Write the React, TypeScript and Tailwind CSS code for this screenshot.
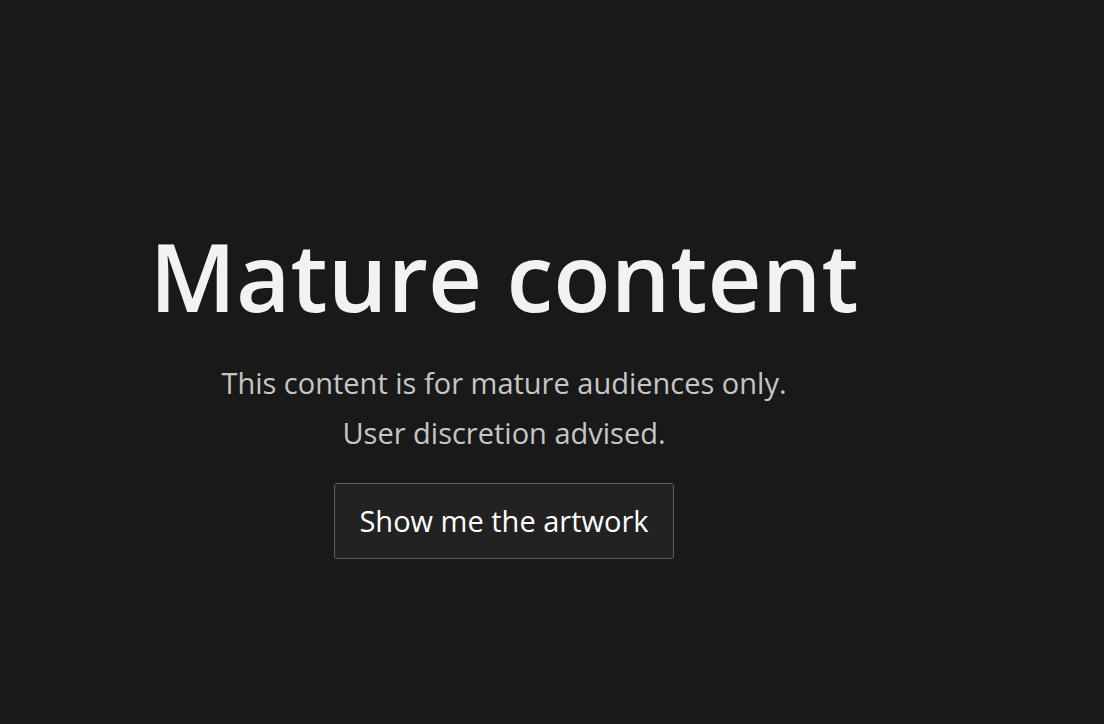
export default function App() {
  return (
    <div
      className="min-h-screen w-full bg-[#191919] text-[#f2f2f2]"
      style={{ fontFamily: '"Open Sans", sans-serif' }}
    >
      <div className="flex w-[1008px] flex-col items-center pt-[229px]">
        <h1 className="text-[94px] font-semibold leading-none">Mature content</h1>
        <p className="mt-[35px] text-[29px] leading-[50px] text-[#c6c6c6]">
          This content is for mature audiences only.
        </p>
        <p className="text-[29px] leading-[50px] text-[#c6c6c6]">User discretion advised.</p>
        <button className="mt-[25px] h-[76px] w-[340px] rounded-[3px] border border-[#5f5f5f] bg-[#222222] text-[29px] text-white">
          Show me the artwork
        </button>
      </div>
    </div>
  )
}
